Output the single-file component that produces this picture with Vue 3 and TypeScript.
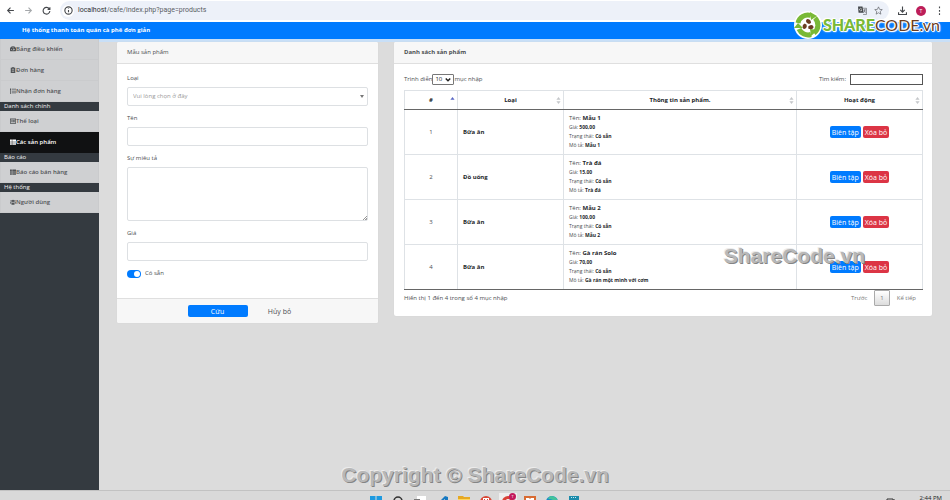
<script setup lang="ts">
import { ref } from 'vue'

interface NavItem {
  label: string
  icon: string
  active?: boolean
}
interface NavGroup {
  title?: string
  items: NavItem[]
}
interface Product {
  id: number
  category: string
  name: string
  price: string
  status: string
  description: string
}

const groups: NavGroup[] = [
  {
    items: [
      { label: 'Bảng điều khiển', icon: 'gauge' },
      { label: 'Đơn hàng', icon: 'clipboard' },
      { label: 'Nhận đơn hàng', icon: 'list' },
    ],
  },
  {
    title: 'Danh sách chính',
    items: [
      { label: 'Thể loại', icon: 'listbox' },
      { label: 'Các sản phẩm', icon: 'grid', active: true },
    ],
  },
  { title: 'Báo cáo', items: [{ label: 'Báo cáo bán hàng', icon: 'grid' }] },
  { title: 'Hệ thống', items: [{ label: 'Người dùng', icon: 'users' }] },
]

const iconPaths: Record<string, string> = {
  gauge: 'M8 1a8 8 0 0 0-7 13h14A8 8 0 0 0 8 1zM7 3h2v2H7zM3 8h2v2H3zM11 8h2v2h-2zM7 12l3-6 1 1-2 5z',
  clipboard: 'M2 2h3V0h6v2h3v14H2zM6 2v1h4V2zM5 6v1h6V6zM5 9v1h6V9zM5 12v1h6v-1z',
  list: 'M0 1h3v4H0zM5 2h11v2H5zM0 6h3v4H0zM5 7h11v2H5zM0 11h3v4H0zM5 12h11v2H5z',
  listbox: 'M0 1h16v14H0zM2 4v9h12V4zM3 5h2v2H3zM6 5h7v2H6zM3 8h2v2H3zM6 8h7v2H6zM3 11h2v1H3zM6 11h7v1H6z',
  grid: 'M0 1h5v4H0zM6 1h10v4H6zM0 6h5v4H0zM6 6h10v4H6zM0 11h5v4H0zM6 11h10v4H6z',
  users: 'M8 2a3 3 0 1 0 .1 0zM3 3a2 2 0 1 0 .1 0zM13 3a2 2 0 1 0 .1 0zM4 15v-4q0-2 4-2t4 2v4zM0 12v-2q0-2 4-2l-1 4zM16 12v-2q0-2-4-2l1 4z',
}

const products: Product[] = [
  { id: 1, category: 'Bữa ăn', name: 'Mẫu 1', price: '500,00', status: 'Có sẵn', description: 'Mẫu 1' },
  { id: 2, category: 'Đồ uống', name: 'Trà đá', price: '15.00', status: 'Có sẵn', description: 'Trà đá' },
  { id: 3, category: 'Bữa ăn', name: 'Mẫu 2', price: '100,00', status: 'Có sẵn', description: 'Mẫu 2' },
  { id: 4, category: 'Bữa ăn', name: 'Gà rán Solo', price: '70,00', status: 'Có sẵn', description: 'Gà rán một mình với cơm' },
]

const category = ref('')
const name = ref('')
const description = ref('')
const price = ref('')
const available = ref(true)
const pageSize = ref(10)
const search = ref('')
</script>

<template>
  <div class="screen">
    <header class="browser">
      <button class="tool" aria-label="Quay lại">
        <svg viewBox="0 0 16 16"><path d="M14 8H3M8 3L3 8l5 5" /></svg>
      </button>
      <button class="tool faint" aria-label="Tiến">
        <svg viewBox="0 0 16 16"><path d="M2 8h11M8 3l5 5-5 5" /></svg>
      </button>
      <button class="tool" aria-label="Tải lại">
        <svg viewBox="0 0 16 16"><path d="M13 5a6 6 0 1 0 1 4M14 2v4h-4" /></svg>
      </button>
      <div class="address">
        <span class="site-info">
          <svg viewBox="0 0 16 16"><circle cx="8" cy="8" r="6.500" /><path d="M8 7v4M8 4.500v1" /></svg>
        </span>
        <span class="url"><b>localhost</b>/cafe/index.php?page=products</span>
        <div class="address-tools">
          <button class="tool" aria-label="Dịch">
            <svg viewBox="0 0 16 16"><path class="solid" d="M0 1h8l2 11H1z" /><path class="thin" d="M8 4h7v11H9M10 7h4M12 6v1q0 3-2 5M11 8l3 4" /><path class="knock" d="M6.500 5A2.200 2.200 0 1 0 7 7H5" /></svg>
          </button>
          <button class="tool" aria-label="Đánh dấu">
            <svg viewBox="0 0 16 16"><path class="thin" d="M8 1.500l2 4.500 4.700.4-3.600 3.200 1.100 4.900L8 12l-4.200 2.500 1.100-4.900L1.300 6.400 6 6z" /></svg>
          </button>
        </div>
      </div>
      <button class="tool" aria-label="Tải xuống">
        <svg viewBox="0 0 16 16"><path d="M8 1v9M4 7l4 4 4-4M1 11v4h14v-4" /></svg>
      </button>
      <button class="avatar">T</button>
      <button class="tool" aria-label="Trình đơn">
        <svg viewBox="0 0 16 16"><path class="solid" d="M7 1h2v3H7zM7 7h2v3H7zM7 13h2v3H7z" /></svg>
      </button>
    </header>

    <div class="topbar">Hệ thống thanh toán quán cà phê đơn giản</div>

    <div class="layout">
      <nav class="sidebar">
        <template v-for="(group, gi) in groups" :key="gi">
          <div v-if="group.title" class="nav-title">{{ group.title }}</div>
          <a
            v-for="item in group.items"
            :key="item.label"
            href="#"
            class="nav-item"
            :class="{ active: item.active }"
          >
            <svg viewBox="0 0 16 16"><path fill-rule="evenodd" :d="iconPaths[item.icon]" /></svg>
            <span>{{ item.label }}</span>
          </a>
        </template>
      </nav>

      <main class="content">
        <form class="card" @submit.prevent>
          <div class="card-header">Mẫu sản phẩm</div>
          <div class="card-body form-body">
            <div class="field">
              <label for="category">Loại</label>
              <div class="select-box">
                <select id="category" v-model="category">
                  <option value="">Vui lòng chọn ở đây</option>
                  <option>Bữa ăn</option>
                  <option>Đồ uống</option>
                </select>
              </div>
            </div>
            <div class="field">
              <label for="name">Tên</label>
              <input id="name" v-model="name" type="text" />
            </div>
            <div class="field">
              <label for="description">Sự miêu tả</label>
              <textarea id="description" v-model="description"></textarea>
            </div>
            <div class="field">
              <label for="price">Giá</label>
              <input id="price" v-model="price" type="text" />
            </div>
            <div class="switch">
              <input id="available" v-model="available" type="checkbox" />
              <label for="available">Có sẵn</label>
            </div>
          </div>
          <div class="card-footer">
            <button type="submit" class="btn save">Cứu</button>
            <button type="reset" class="btn cancel">Hủy bỏ</button>
          </div>
        </form>

        <section class="card">
          <div class="card-header strong">Danh sách sản phẩm</div>
          <div class="card-body list-body">
            <div class="controls">
              <div class="length">
                <label for="page-size">Trình diễn</label>
                <span class="length-select">
                  <select id="page-size" v-model="pageSize">
                    <option :value="10">10</option>
                    <option :value="25">25</option>
                  </select>
                  <svg viewBox="0 0 8 8"><path d="M1 2l3 3 3-3" /></svg>
                </span>
                <span>mục nhập</span>
              </div>
              <div class="search">
                <label for="search">Tìm kiếm:</label>
                <input id="search" v-model="search" type="search" />
              </div>
            </div>

            <table>
              <colgroup>
                <col class="col-id" />
                <col class="col-category" />
                <col />
                <col class="col-action" />
              </colgroup>
              <thead>
                <tr>
                  <th v-for="(title, i) in ['#', 'Loại', 'Thông tin sản phẩm.', 'Hoạt động']" :key="title">
                    <div class="head-cell">
                      <span>{{ title }}</span>
                      <svg class="sort" :class="{ sorted: i === 0 }" viewBox="0 0 6 10">
                        <path d="M0 4l3-4 3 4z" />
                        <path v-if="i > 0" d="M0 6l3 4 3-4z" />
                      </svg>
                    </div>
                  </th>
                </tr>
              </thead>
              <tbody>
                <tr v-for="product in products" :key="product.id">
                  <td class="center">{{ product.id }}</td>
                  <td><b>{{ product.category }}</b></td>
                  <td>
                    <p>Tên: <b>{{ product.name }}</b></p>
                    <p class="small">Giá: <b>{{ product.price }}</b></p>
                    <p class="small">Trạng thái: <b>{{ product.status }}</b></p>
                    <p class="small">Mô tả: <b>{{ product.description }}</b></p>
                  </td>
                  <td>
                    <div class="actions">
                      <button class="btn edit">Biên tập</button>
                      <button class="btn delete">Xóa bỏ</button>
                    </div>
                  </td>
                </tr>
              </tbody>
            </table>

            <div class="table-footer">
              <span>Hiển thị 1 đến 4 trong số 4 mục nhập</span>
              <div class="pagination">
                <button>Trước</button>
                <button class="current">1</button>
                <button>Kế tiếp</button>
              </div>
            </div>
          </div>
        </section>
      </main>
    </div>

    <footer class="taskbar">
      <div class="apps">
        <svg viewBox="0 0 12 12"><path fill="#1d9ae0" d="M0 0h5.500v5.500H0zM6.500 0H12v5.500H6.500zM0 6.500h5.500V12H0zM6.500 6.500H12V12H6.500z" /></svg>
        <svg viewBox="0 0 12 12"><circle cx="6" cy="5" r="4" fill="none" stroke="#333" stroke-width="1.500" /><path d="M9 8l3 4" stroke="#333" /></svg>
        <svg viewBox="0 0 12 12"><path fill="#fff" d="M3 0h9v8H3z" /><path fill="#777" d="M0 3h6v7H0z" /></svg>
        <svg viewBox="0 0 12 12"><path fill="#1679c2" d="M9 0l3 1v10l-3 1-8-7 1-1 2 1zM9 3L5 6l4 3z" /></svg>
        <svg viewBox="0 0 12 12"><path fill="#e6a823" d="M0 0h5l1 1h6v10H0z" /><path fill="#ffd65b" d="M0 3h12v8H0z" /></svg>
        <svg viewBox="0 0 12 12"><circle cx="6" cy="6" r="6" fill="#d94836" /><path fill="#fff" d="M3 2h6v4H3z" /><path fill="#d94836" d="M4 3h1v2H4zM7 3h1v2H7z" /></svg>
        <span class="running">
          <svg viewBox="0 0 12 12"><circle cx="6" cy="6" r="6" fill="#d94135" /><circle cx="6" cy="6" r="2.500" fill="#4285f4" stroke="#fff" /></svg>
          <i>T</i>
        </span>
        <svg viewBox="0 0 12 12"><path fill="#d86b32" d="M0 0h12v12H0z" /><path fill="#fff" d="M2 2h3l1 1 1-1h3v2L8 6l2 3H7L6 8 5 9H2l2-3-2-2z" /></svg>
        <svg viewBox="0 0 12 12"><circle cx="6" cy="6" r="6" fill="#168bc8" /><path fill="#43c39a" d="M4 0q8 0 8 7H7q2-4-5-4z" /></svg>
        <svg viewBox="0 0 12 12"><path fill="#1b8bab" d="M1 0h10v12H1z" /><path fill="#c5edf5" d="M3 1h1v1H3zM5 1h1v1H5zM7 1h1v1H7zM2 4h8v1H2z" /></svg>
      </div>
      <div class="status">
        <svg viewBox="0 0 22 8"><path fill="none" stroke="#333" d="M1 1h6v6H1zM8 1v3M15 4l2-2 2 2" /></svg>
        <time>2:44 PM</time>
      </div>
    </footer>

    <div class="brand">
      <svg viewBox="0 0 28 28">
        <circle cx="14" cy="14" r="14" fill="#fff" />
        <g fill="none" stroke="#79b936" stroke-width="5">
          <path d="M4 12A10 10 0 0 1 17 4.500" />
          <path d="M21 7A10 10 0 0 1 20 22" />
          <path d="M17 23.500A10 10 0 0 1 5 18" />
        </g>
        <path fill="#79b936" d="M16 1l7 4-6 4zM24 19l-7 6-1-7zM0 17l4-5 5 5z" />
        <g fill="#6b3d22">
          <path d="M13 12q-2-2 0-4 4 0 4 4l-2 1z" />
          <path d="M13 12q-2-2 0-4 4 0 4 4l-2 1z" transform="rotate(120 14 14)" />
          <path d="M13 12q-2-2 0-4 4 0 4 4l-2 1z" transform="rotate(240 14 14)" />
        </g>
      </svg>
      <span class="brand-name"><b>SHARE</b>CODE.vn</span>
    </div>
    <div class="mark mark-table">ShareCode.vn</div>
    <div class="mark mark-bottom">Copyright © ShareCode.vn</div>
  </div>
</template>

<style>
body {
  margin: 0;
}
</style>

<style scoped>
* {
  box-sizing: border-box;
}
.screen {
  position: relative;
  display: flex;
  flex-direction: column;
  min-height: 100vh;
  overflow: hidden;
  background: #dcdcdc;
  color: #4c4f52;
  font: 6px/9px 'Open Sans', 'Noto Sans', sans-serif;
}
button,
input,
select,
textarea {
  margin: 0;
  padding: 0;
  border: 0;
  background: none;
  color: inherit;
  font: inherit;
}
.browser {
  display: flex;
  align-items: center;
  gap: 9px;
  height: 22px;
  padding: 0 6px 1px;
  background: #fff;
  color: #45484c;
}
.tool {
  display: flex;
  flex: none;
  width: 9px;
}
.tool svg,
.site-info svg {
  width: 9px;
  height: 9px;
  fill: none;
  stroke: currentColor;
  stroke-width: 2;
}
.tool .thin {
  stroke-width: 1;
}
.tool .solid {
  fill: currentColor;
  stroke: none;
}
.tool .knock {
  stroke: #fff;
  stroke-width: 1;
}
.faint {
  color: #a5a8ab;
}
.address {
  display: flex;
  flex: 1;
  align-items: center;
  gap: 4px;
  height: 19px;
  padding: 0 6px 0 2px;
  border-radius: 10px;
  background: #edf1f9;
}
.address-tools {
  display: flex;
  gap: 7px;
}
.site-info {
  display: flex;
  align-items: center;
  justify-content: center;
  width: 12px;
  height: 12px;
  border-radius: 6px;
  background: #fff;
}
.url {
  flex: 1;
  color: #5b5f64;
  font: 7px/9px Roboto, sans-serif;
}
.url b {
  color: #303336;
  font-weight: 400;
}
.avatar {
  width: 10px;
  height: 10px;
  border-radius: 5px;
  background: #bd1e59;
  color: #fff;
  font-size: 5px;
  line-height: 10px;
}
.topbar {
  padding: 4px 22px;
  background: #007bff;
  color: #fff;
  font-weight: 700;
}
.layout {
  display: flex;
  flex: 1;
}
.sidebar {
  flex: none;
  width: 99px;
  background: #343a40;
}
.nav-title {
  padding: 0 4px;
  color: #f4f4f4;
}
.nav-item {
  display: flex;
  align-items: center;
  height: 21px;
  padding: 0 9px;
  border: solid #cacbcd;
  border-width: 0 1px 1px;
  background: #cfd0d2;
  color: #505356;
  font-weight: 600;
  text-decoration: none;
}
.nav-item svg {
  width: 6px;
  height: 6px;
  fill: currentColor;
}
.nav-item.active {
  border-color: #101112;
  background: #101112;
  color: #fff;
}
.content {
  display: grid;
  flex: 1;
  grid-template-columns: 261fr 538fr;
  align-items: start;
  gap: 16px;
  padding: 0 18px;
  border-top: 3px solid #c8dff7;
}
.card {
  border-radius: 2px;
  background: #fff;
  box-shadow: 0 0 1px #ccc;
}
.card-header {
  padding: 6px 10px;
  border-bottom: 1px solid #dfdfdf;
  border-radius: 2px 2px 0 0;
  background: #f7f7f7;
}
.strong {
  font-weight: 700;
}
.card-body {
  padding: 10px;
}
.form-body {
  display: flex;
  flex-direction: column;
  gap: 8px;
  padding-bottom: 20px;
}
.field {
  display: flex;
  flex-direction: column;
  gap: 4px;
}
.field input,
.field textarea,
.select-box {
  width: 100%;
  height: 19px;
  padding: 0 5px;
  border: 1px solid #dde0e3;
  border-radius: 2px;
  background: #fff;
}
.field textarea {
  height: 54px;
  resize: none;
  background: linear-gradient(135deg, transparent 50%, #999 50%, #999 60%, transparent 60%, transparent 75%, #999 75%) right bottom / 4px 4px no-repeat #fff;
}
.select-box {
  display: flex;
  align-items: center;
  padding-right: 3px;
}
.select-box select {
  flex: 1;
  appearance: none;
  color: #999;
}
.select-box::after {
  border: 2px solid transparent;
  border-top: 3px solid #777;
  border-bottom: 0;
  content: '';
}
.switch {
  display: flex;
  align-items: center;
  gap: 4px;
}
.switch input {
  display: flex;
  align-items: center;
  justify-content: flex-end;
  width: 14px;
  height: 8px;
  padding: 1px;
  border-radius: 4px;
  background: #adb5bd;
  appearance: none;
}
.switch input:checked {
  background: #007bff;
}
.switch input::before {
  width: 6px;
  height: 6px;
  border-radius: 3px;
  background: #fff;
  content: '';
}
.card-footer {
  display: flex;
  justify-content: center;
  gap: 2px;
  padding: 6px 8px 6px 10px;
  border-top: 1px solid #dfdfdf;
  border-radius: 0 0 2px 2px;
  background: #f7f7f7;
}
.btn {
  padding: 1px 2px 0;
  border-radius: 2px;
  font-size: 7px;
  line-height: 11px;
}
.save,
.cancel {
  width: 60px;
}
.save,
.edit {
  background: #007bff;
  color: #fff;
}
.delete {
  background: #dc3545;
  color: #fff;
}
.list-body {
  padding-right: 9px;
}
.controls {
  display: flex;
  align-items: center;
  justify-content: space-between;
  margin-bottom: 5px;
}
.length,
.search {
  display: flex;
  align-items: center;
}
.length-select {
  display: flex;
  align-items: center;
  width: 22px;
  height: 11px;
  padding: 0 2px;
  border: 1px solid #777;
  border-radius: 1px;
  background: #fff;
  color: #222;
}
.length-select select {
  flex: 1;
  min-width: 0;
  appearance: none;
}
.length-select svg {
  width: 6px;
  height: 6px;
  fill: none;
  stroke: #222;
  stroke-width: 2;
}
.search {
  gap: 4px;
}
.search input {
  width: 73px;
  height: 11px;
  border: 1px solid #555;
}
table {
  width: 100%;
  border-collapse: collapse;
  border-bottom: 1px solid #666;
  table-layout: fixed;
}
.col-id {
  width: 53px;
}
.col-category {
  width: 106px;
}
.col-action {
  width: 126px;
}
th,
td {
  padding: 4px 5px;
  border: 1px solid #dee2e6;
  text-align: left;
}
th {
  padding: 5px 2px 4px;
  border-bottom: 1px solid #666;
  color: #212529;
}
tbody tr:last-child td {
  border-bottom-color: #666;
}
.head-cell {
  display: flex;
  align-items: center;
  padding-left: 5px;
}
.head-cell span {
  flex: 1;
  text-align: center;
}
.sort {
  width: 5px;
  height: 7px;
  fill: #c5c7ca;
}
.sorted {
  fill: #5967c4;
}
td b {
  color: #25282b;
}
.center {
  text-align: center;
}
p {
  margin: 0;
}
.small {
  font-size: 5px;
}
.actions {
  display: flex;
  justify-content: center;
  gap: 2px;
}
.table-footer {
  display: flex;
  align-items: center;
  justify-content: space-between;
}
.pagination {
  display: flex;
  align-items: center;
}
.pagination button {
  padding: 0 7px;
  color: #777;
  line-height: 14px;
}
.pagination .current {
  padding: 0 5px;
  border: 1px solid #aaa;
  border-radius: 1px;
  background: linear-gradient(#fff, #dcdcdc);
}
.taskbar {
  display: grid;
  grid-template-columns: 1fr auto 1fr;
  height: 10px;
  padding: 5px 8px 0;
  overflow: hidden;
  border-top: 1px solid #c2c2c2;
  background: #d9d9d9;
  color: #222;
}
.apps {
  display: flex;
  grid-column: 2;
  gap: 10px;
}
.apps svg {
  width: 12px;
  height: 12px;
}
.running {
  position: relative;
  display: flex;
  background: #eee;
  box-shadow: 0 0 0 3px #eee;
}
.running i {
  position: absolute;
  top: -3px;
  right: -2px;
  width: 7px;
  height: 7px;
  border-radius: 4px;
  background: #c2185b;
  color: #fff;
  font-size: 4px;
  font-style: normal;
  line-height: 7px;
  text-align: center;
}
.status {
  display: flex;
  justify-content: flex-end;
  gap: 12px;
  line-height: 4px;
}
.status svg {
  width: 22px;
  height: 8px;
  margin-top: 2px;
}
.brand {
  position: absolute;
  top: 11px;
  right: 10px;
  display: flex;
  align-items: center;
  gap: 1px;
}
.brand svg {
  width: 28px;
  height: 28px;
}
.brand-name {
  color: #6b3d22;
  font: 400 16px/28px Lato, sans-serif;
  text-shadow: 1px 0 #fff, -1px 0 #fff, 0 1px #fff, 0 -1px #fff, 1px 1px 1px #fff, -1px -1px 1px #fff, 0 0 2px #fff, 0 0 3px #fff;
}
.brand-name b {
  color: #79b936;
  font-weight: 900;
}
.mark {
  position: absolute;
  color: #b8b8b8;
  font: 700 21px/24px 'Liberation Sans', sans-serif;
  text-shadow: 1px 1px 0 #858585, -1px -1px 0 #ececec;
  pointer-events: none;
  white-space: nowrap;
}
.mark-table {
  top: 244px;
  right: 85px;
}
.mark-bottom {
  right: 0;
  bottom: 13px;
  left: 0;
  text-align: center;
}
</style>
